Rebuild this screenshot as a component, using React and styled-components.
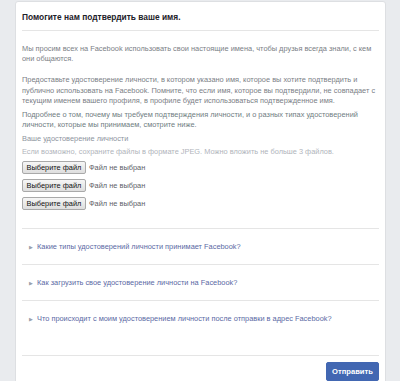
import React from 'react';
import styled, { createGlobalStyle } from 'styled-components';

const Global = createGlobalStyle`
  html, body {
    margin: 0;
    padding: 0;
    background: #e9ebee;
    font-family: 'Liberation Sans', Arial, sans-serif;
  }
`;

const Page = styled.div`
  padding: 1px 0 0 15px;
  height: 380px;
  overflow: hidden;
`;

const Card = styled.div`
  width: 357px;
  background: #fff;
  border: 1px solid #dddfe2;
  border-radius: 3px;
  padding: 0 6px;
  min-height: 400px;
`;

const Header = styled.div`
  height: 27px;
  display: flex;
  align-items: center;
  border-bottom: 1px solid #e5e5e5;
  font-size: 8.4px;
  font-weight: bold;
  color: #1d2129;
  padding-top: 1px;
`;

const Para = styled.p`
  margin: ${p => p.$mt || 0}px 0 0;
  font-size: 7.4px;
  line-height: 10.2px;
  color: ${p => p.$color || '#7a7e85'};
`;

const Label = styled.div`
  margin-top: ${p => p.$mt}px;
  font-size: 7.4px;
  line-height: 10px;
  color: ${p => p.$color};
`;

const FileRow = styled.div`
  display: flex;
  align-items: center;
  gap: 3px;
  margin-top: ${p => p.$mt}px;
  font-size: 7.4px;
  color: #5d6167;
`;

const FileButton = styled.button`
  height: 13px;
  width: 64px;
  padding: 0;
  font-family: inherit;
  font-size: 7.4px;
  color: #111;
  background: linear-gradient(#f6f6f6, #dedede);
  border: 1px solid #a9a9a9;
  border-radius: 2px;
`;

const Section = styled.div`
  border-top: 1px solid #e5e5e5;
  padding: ${p => p.$pad || '12.5px 0'};
  display: flex;
  align-items: center;
  font-size: 7.4px;
  line-height: 10px;
  color: #5a69a4;
`;

const Arrow = styled.span`
  font-size: 5px;
  color: #9aa0ab;
  margin: 0 4px 0 7px;
`;

const Footer = styled.div`
  border-top: 1px solid #e5e5e5;
  display: flex;
  justify-content: flex-end;
  padding-top: 6px;
`;

const Send = styled.button`
  height: 19px;
  width: 53px;
  padding: 0;
  background: #4267b2;
  border: 1px solid #4267b2;
  border-radius: 2px;
  color: #fff;
  font-family: inherit;
  font-weight: bold;
  font-size: 7.6px;
`;

const Spacer = styled.div`
  height: 18px;
`;

const questions = [
  'Какие типы удостоверений личности принимает Facebook?',
  'Как загрузить свое удостоверение личности на Facebook?',
  'Что происходит с моим удостоверением личности после отправки в адрес Facebook?',
];

export default function App() {
  return (
    <>
      <Global />
      <Page>
        <Card>
          <Header>Помогите нам подтвердить ваше имя.</Header>
          <Para $mt={13}>
            Мы просим всех на Facebook использовать свои настоящие имена, чтобы друзья всегда знали, с кем они общаются.
          </Para>
          <Para $mt={11}>
            Предоставьте удостоверение личности, в котором указано имя, которое вы хотите подтвердить и публично использовать на Facebook. Помните, что если имя, которое вы подтвердили, не совпадает с текущим именем вашего профиля, в профиле будет использоваться подтвержденное имя.
          </Para>
          <Para $mt={4} $color="#6f7d7f">
            Подробнее о том, почему мы требуем подтверждения личности, и о разных типах удостоверений личности, которые мы принимаем, смотрите ниже.
          </Para>
          <Label $mt={4} $color="#8d949e">Ваше удостоверение личности</Label>
          <Label $mt={3} $color="#b0b4bb">Если возможно, сохраните файлы в формате JPEG. Можно вложить не больше 3 файлов.</Label>
          {[4, 5, 5].map((mt, i) => (
            <FileRow key={i} $mt={mt}>
              <FileButton>Выберите файл</FileButton>
              <span>Файл не выбран</span>
            </FileRow>
          ))}
          <Spacer />
          {questions.map((q, i) => (
            <Section key={q} $pad={i === 2 ? '12.5px 0 31.5px' : undefined}>
              <Arrow>▶</Arrow>
              {q}
            </Section>
          ))}
          <Footer>
            <Send>Отправить</Send>
          </Footer>
        </Card>
      </Page>
    </>
  );
}
